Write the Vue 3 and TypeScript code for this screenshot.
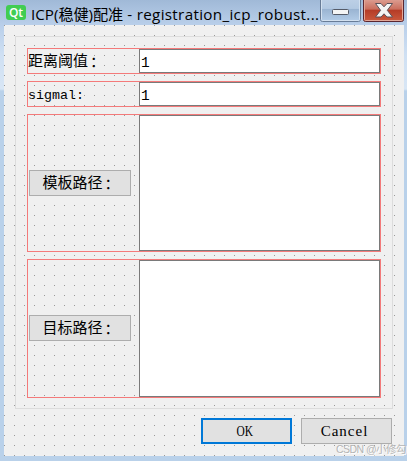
<script setup lang="ts">
import { ref } from 'vue'

interface Field { label: string; colon: string; value: string }
interface PathField { label: string; colon: string; text: string; tall: boolean }

const title = { lead: 'ICP(', a: '稳健', mid: ')', b: '配准', tail: ' - registration_icp_robust...' }
const fields = ref<Field[]>([
  { label: '距离阈值', colon: '：', value: '1' },
  { label: 'sigmal:', colon: '', value: '1' },
])
const paths = ref<PathField[]>([
  { label: '模板路径', colon: '：', text: '', tall: false },
  { label: '目标路径', colon: '：', text: '', tall: true },
])
</script>

<template>
  <div class="window">
    <header class="titlebar">
      <span class="logo">Qt</span>
      <h1 class="title">{{ title.lead }}<span class="han">{{ title.a }}</span>{{ title.mid }}<span class="han">{{ title.b }}</span><span class="tail">{{ title.tail }}</span></h1>
      <svg class="controls" width="89" height="25" viewBox="0 0 89 25">
        <defs>
          <linearGradient id="blue" x1="0" y1="0" x2="0" y2="1">
            <stop offset="0" stop-color="#bdd0e6" /><stop offset=".42" stop-color="#b3c9e2" />
            <stop offset=".46" stop-color="#9ab4d2" /><stop offset="1" stop-color="#b4cde8" />
          </linearGradient>
          <linearGradient id="red" x1="0" y1="0" x2="0" y2="1">
            <stop offset="0" stop-color="#dda094" /><stop offset=".45" stop-color="#ca6e5d" />
            <stop offset=".5" stop-color="#b53c27" /><stop offset="1" stop-color="#cb5a3e" />
          </linearGradient>
        </defs>
        <path d="M5.5 -1V19.5Q5.5 21.5 7.5 21.5H43.5Q45.5 21.5 45.5 19.5V-1Z" fill="url(#blue)" stroke="#687c97" />
        <path d="M6.5 0V19.5Q6.5 20.5 7.5 20.5H43.5Q44.5 20.5 44.5 19.5V0" fill="none" stroke="#d3e1f0" />
        <rect x="17.5" y="9.5" width="16" height="5" rx="1" fill="#f5f5f5" stroke="#555b68" />
        <path d="M48.5 -1V19.5Q48.5 21.5 50.5 21.5H86.5Q88.5 21.5 88.5 19.5V-1Z" fill="url(#red)" stroke="#5b2630" />
        <path d="M49.5 0V19.5Q49.5 20.5 50.5 20.5H86.5Q87.5 20.5 87.5 19.5V0" fill="none" stroke="#e3a899" />
        <path d="M60.5 3.5H66L69 6.8L72 3.5H77.5L72.3 10.3L77.5 17H72L69 13.8L66 17H60.5L65.6 10.3Z" fill="#f4f4f4" stroke="#5a5159" stroke-linejoin="round" />
      </svg>
    </header>

    <main class="canvas">
      <section class="group">
        <div v-for="f in fields" :key="f.label" class="row">
          <label class="label">{{ f.label }}<span class="colon">{{ f.colon }}</span></label>
          <input v-model="f.value" class="input" type="text">
        </div>
        <div v-for="p in paths" :key="p.label" class="row path" :class="{ tall: p.tall }">
          <div class="side"><button class="btn browse">{{ p.label }}<span class="colon">{{ p.colon }}</span></button></div>
          <textarea v-model="p.text" class="input area"></textarea>
        </div>
      </section>
      <footer class="actions">
        <button class="btn action primary"><span class="squeeze">OK</span></button>
        <button class="btn action">Cancel</button>
      </footer>
    </main>
    <span class="watermark">CSDN @小修勾</span>
  </div>
</template>

<style>
body { margin: 0; overflow: hidden; }
</style>

<style scoped>
* { box-sizing: border-box; }
.window {
  position: relative;
  width: 407px;
  height: 461px;
  padding: 0 3px 5px 4px;
  background: linear-gradient(#a0b9d7 0, #b9cfea 25px, #cfe0f3 55px, #d8e6f5 89px, #b9d1ea 91px);
  font: 15px/20px "Liberation Mono", "Noto Sans CJK SC", monospace;
  color: #000;
}
.titlebar { display: flex; height: 25px; align-items: flex-start; }
.logo {
  flex: none;
  width: 20px;
  height: 15px;
  margin: 5px 0 0 2px;
  border-radius: 3px;
  background: #41cd52;
  color: #fff;
  font: 600 12px/15px "Open Sans", sans-serif;
  text-align: center;
}
.title {
  flex: none;
  width: 284px;
  margin: 4px 0 0 5px;
  font: 400 15.2px/20px "Open Sans", "Noto Sans CJK SC", sans-serif;
  white-space: pre;
}
.han { letter-spacing: -0.2px; }
.tail { letter-spacing: 0.33px; }
.controls { flex: none; }
.canvas {
  height: 431px;
  padding: 11px;
  background: #f0f0f0 radial-gradient(circle at 0.5px 0.5px, #999 0 0.6px, transparent 0.7px) 0 0 / 10px 10px;
}
.group {
  display: flex;
  flex-direction: column;
  width: 378px;
  height: 373px;
  padding: 11px;
  gap: 7px;
  border: 1px solid #dcdcdc;
}
.row {
  display: flex;
  flex: none;
  width: 354px;
  height: 26px;
  border: 1px solid #f47a7a;
}
.label { width: 111px; padding-top: 2px; line-height: 24px; white-space: nowrap; }
.row:nth-child(2) .label { font-size: 13.33px; }
.colon { position: relative; left: 2px; top: 1px; }
.input {
  width: 241px;
  height: 100%;
  margin: 0;
  padding: 3px 1px 0;
  border: 1px solid #7a7a7a;
  border-radius: 0;
  outline: 0;
  background: #fff;
  color: #000;
  font: 14.5px/20px "Liberation Mono", monospace;
  resize: none;
}
.path { height: 138px; }
.tall { height: 139px; }
.side { width: 111px; padding: 55px 0 0 1px; }
.btn {
  display: block;
  height: 26px;
  padding: 0;
  border: 1px solid #adadad;
  background: #e1e1e1;
  color: #000;
  font: 15px/24px "Liberation Mono", "Noto Sans CJK SC", monospace;
}
.browse { width: 102px; padding-top: 3px; line-height: 21px; white-space: nowrap; }
.actions { display: flex; gap: 9px; padding: 9px 1px 0 186px; }
.action { width: 91px; font: 15px/25px "Liberation Serif", serif; letter-spacing: 1px; padding-right: 4px; }
.primary { border: 2px solid #0078d7; line-height: 23px; }
.squeeze { display: inline-block; transform: scaleX(0.76); letter-spacing: 0; }
.watermark {
  position: absolute;
  left: 336px;
  top: 440px;
  color: #b4b4b4;
  font: 10.5px/18px "Liberation Sans", "Noto Sans CJK SC", sans-serif;
  letter-spacing: -0.55px;
  text-shadow: 1px 1px 0 #fff;
  white-space: nowrap;
}
</style>
